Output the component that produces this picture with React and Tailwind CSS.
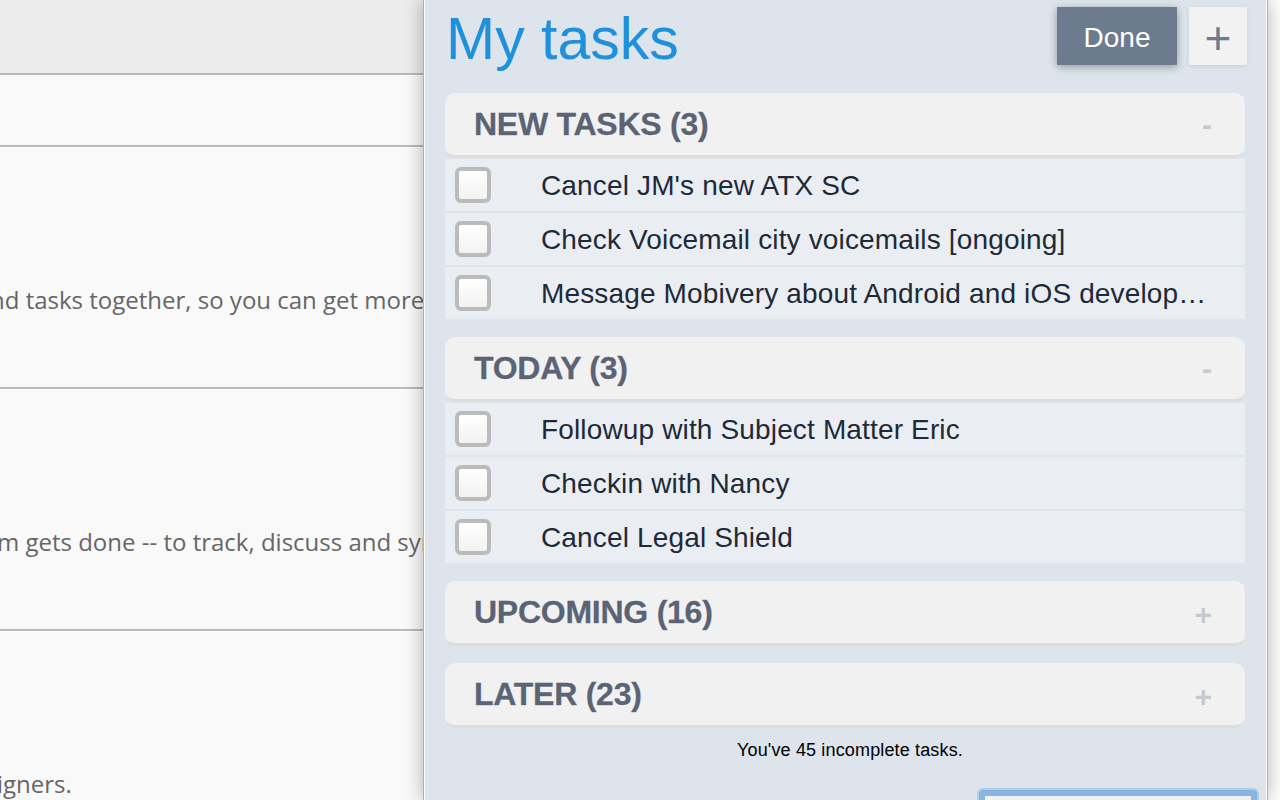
const sans = "font-['Liberation_Sans',Arial,sans-serif]";

function LeftRow({ h, text, last }) {
  return (
    <div className={`flex shrink-0 flex-col justify-start overflow-hidden bg-[#f9f9f9] ${h} ${last ? "" : "border-b-2 border-[#b9b9b9]"}`}>
      <div className="h-px shrink-0 bg-white" />
      {text}
    </div>
  );
}

function Copy({ children, mt }) {
  return (
    <p className={`whitespace-nowrap font-['Open_Sans',sans-serif] text-[24px] leading-[32px] text-[#666666] ${mt}`}>
      {children}
    </p>
  );
}

function Section({ title, sign, tasks }) {
  return (
    <section className="shrink-0">
      <div className="flex h-[65px] items-center justify-between rounded-[10px] border-b-[3px] border-[#dfdddb] bg-[#f1f1f1] pl-[29px] pr-[33px]">
        <h2 className="pb-[1px] text-[32px] font-bold tracking-[-0.25px] text-[#5a6474] [-webkit-text-stroke:0.3px_#5a6474] [text-shadow:0_1px_0_#ffffff]">{title}</h2>
        <span className={`font-bold leading-none text-[#c6c9cf] ${sign === "+" ? "pt-[6px] text-[30px]" : "pt-[2px] text-[30px]"}`}>{sign}</span>
      </div>
      {tasks && (
        <ul className="mt-[1px] flex flex-col gap-[2px]">
          {tasks.map((t) => (
            <li key={t} className="flex h-[52px] items-center bg-[#eaeef2] pl-[10px] pr-[38px]">
              <span className="h-[36px] w-[36px] shrink-0 rounded-[6px] border-[4px] border-[#bbbbbb] bg-gradient-to-b from-white to-[#f2f2f2]" />
              <span className="ml-[50px] truncate pt-[2px] text-[28px] tracking-[0.15px] text-[#1e2a38]">{t}</span>
            </li>
          ))}
        </ul>
      )}
    </section>
  );
}

export default function App() {
  return (
    <div className={`flex h-[800px] w-[1280px] overflow-hidden bg-white ${sans}`}>
      <div className="flex w-[423px] shrink-0 flex-col">
        <div className="h-[75px] shrink-0 border-b-2 border-[#b9b9b9] bg-[#ececec]" />
        <LeftRow h="h-[72px]" />
        <LeftRow h="h-[242px]" text={<Copy mt="mt-[136px] -ml-[10px]">nd tasks together, so you can get more</Copy>} />
        <LeftRow h="h-[242px]" text={<Copy mt="mt-[136px] -ml-[3px]">m gets done -- to track, discuss and sync</Copy>} />
        <LeftRow last h="h-[169px]" text={<Copy mt="mt-[136px] -ml-[3px]">igners.</Copy>} />
      </div>

      <main className="relative z-10 flex w-[845px] shrink-0 flex-col border-x border-[#b0b0b0] bg-[#dde4eb] shadow-[0_0_18px_rgba(0,0,0,0.3)]">
        <div className="flex h-full flex-col border-x border-white pl-[20px] pr-[21px]">
          <header className="flex h-[93px] shrink-0 items-start justify-between">
            <h1 className="mt-[5px] pl-[1px] text-[59px] leading-[68px] text-[#1f90db]">My tasks</h1>
            <div className="mt-[7px] -mr-[2px] flex gap-[12px]">
              <button className="h-[58px] w-[120px] bg-[#6c7b8e] pt-[3px] text-[28px] text-white shadow-[0_2px_8px_rgba(0,0,0,0.35)]">Done</button>
              <button className="flex h-[58px] w-[58px] items-center justify-center bg-[#f2f2f2] pt-[3px] text-[46px] leading-none text-[#6c7b8e] shadow-[0_1px_4px_rgba(0,0,0,0.1)]">+</button>
            </div>
          </header>

          <div className="flex shrink-0 flex-col gap-[18px]">
            <Section
              title="NEW TASKS (3)"
              sign="-"
              tasks={["Cancel JM's new ATX SC", "Check Voicemail city voicemails [ongoing]", "Message Mobivery about Android and iOS development"]}
            />
            <Section
              title="TODAY (3)"
              sign="-"
              tasks={["Followup with Subject Matter Eric", "Checkin with Nancy", "Cancel Legal Shield"]}
            />
            <div className="flex flex-col gap-[17px]">
              <Section title="UPCOMING (16)" sign="+" />
              <Section title="LATER (23)" sign="+" />
            </div>
          </div>

          <p className="mt-[11px] shrink-0 pl-[10px] text-center text-[18px] leading-[22px] tracking-[0.15px] text-black">You've 45 incomplete tasks.</p>
          <div className="mt-[29px] -mr-[12px] ml-auto h-[40px] w-[278px] shrink-0 rounded-[4px] border-[6px] border-[#8ab5df] bg-[#eef1f4] shadow-[0_0_0_2px_#b3cde6]" />
        </div>
      </main>

      <div className="flex-1 bg-white" />
    </div>
  );
}
